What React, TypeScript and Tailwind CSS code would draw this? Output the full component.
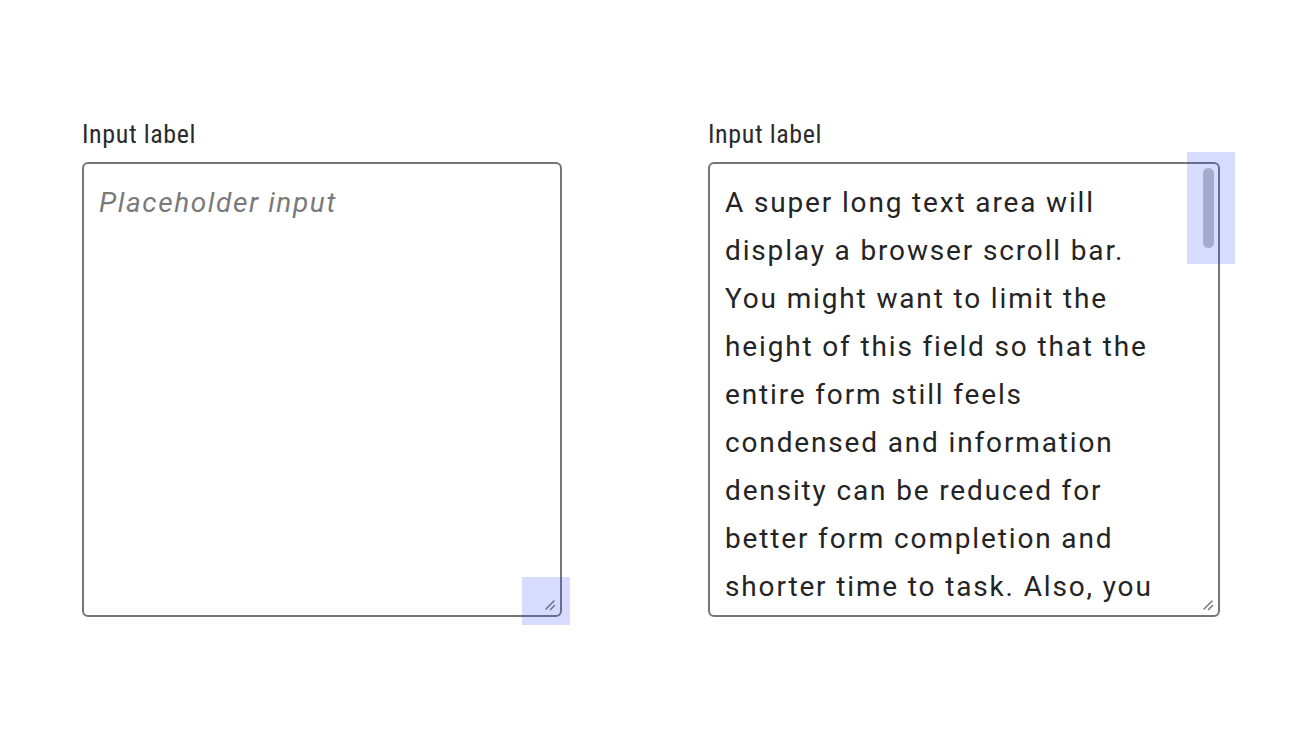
import React from 'react';

const longText =
  'A super long text area will display a browser scroll bar. You might want to limit the height of this field so that the entire form still feels condensed and information density can be reduced for better form completion and shorter time to task. Also, you might want to make sure that the field can be resized by the user.';

const ResizeGrip: React.FC = () => (
  <svg width="12" height="12" viewBox="0 0 12 12" className="text-[#757575]">
    <path d="M2 10 L10 2 M6.5 10.5 L10.5 6.5" stroke="currentColor" strokeWidth="1.5" strokeLinecap="round" />
  </svg>
);

const Label: React.FC<{ children: React.ReactNode }> = ({ children }) => (
  <label className="block text-[26px] leading-[32px] tracking-[0.6px] text-[#2b2b2b] mb-[12px] font-['Roboto_Condensed',Roboto,sans-serif]">
    {children}
  </label>
);

export default function App() {
  return (
    <div className="min-h-[740px] bg-white font-['Roboto',sans-serif]">
      <div className="flex pt-[118px] pl-[82px] gap-[146px]">
        <div className="w-[480px]">
          <Label>Input label</Label>
          <div className="relative h-[455px] rounded-[6px] border-2 border-[#757575] pl-[15px] pr-[24px] pt-[15px]">
            <p className="text-[28px] leading-[48px] tracking-[1.6px] italic text-[#7a7a7a]">Placeholder input</p>
            <div className="absolute right-[4px] bottom-[4px]">
              <ResizeGrip />
            </div>
            <div className="absolute -right-[10px] -bottom-[10px] w-[48px] h-[48px] bg-[rgba(55,80,250,0.2)]" />
          </div>
        </div>
        <div className="w-[512px]">
          <Label>Input label</Label>
          <div className="relative h-[455px] rounded-[6px] border-2 border-[#757575]">
            <div className="h-full overflow-hidden pl-[15px] pr-[46px] pt-[15px]">
              <p className="text-[28px] leading-[48px] tracking-[1.85px] text-[#242424]">{longText}</p>
            </div>
            <div className="absolute top-[4px] right-[4px] w-[11px] h-[80px] rounded-full bg-[#c1c1c1]" />
            <div className="absolute right-[4px] bottom-[4px]">
              <ResizeGrip />
            </div>
            <div className="absolute -right-[17px] -top-[12px] w-[48px] h-[112px] bg-[rgba(55,80,250,0.2)]" />
          </div>
        </div>
      </div>
    </div>
  );
}
